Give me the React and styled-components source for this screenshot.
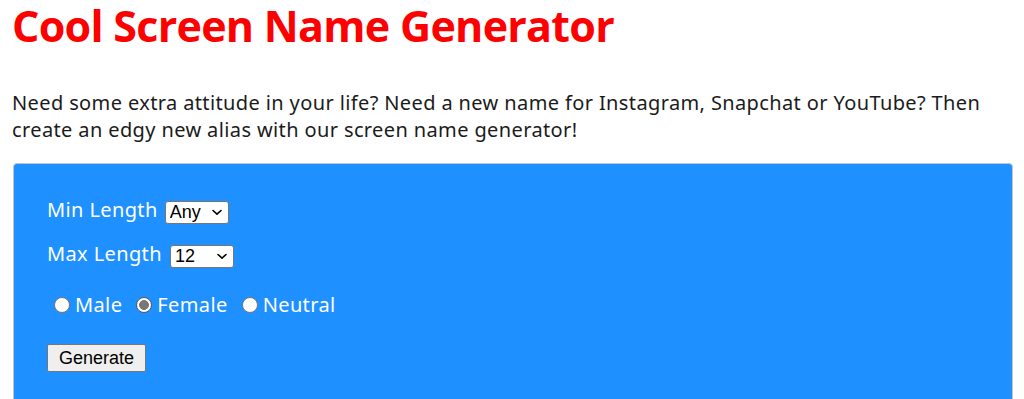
import React, { useState } from "react";
import styled, { createGlobalStyle } from "styled-components";

const GlobalStyle = createGlobalStyle`
  html, body { margin: 0; padding: 0; background: #ffffff; }
  body { font-family: "Noto Sans", "Open Sans", sans-serif; color: #1b1b1b; }
`;

const Page = styled.main`
  padding: 0 11px 0 13px;
`;

const Title = styled.h1`
  margin: 0 0 0 -1px;
  font-family: "Open Sans", "Noto Sans", sans-serif;
  font-size: 43px;
  line-height: 52px;
  font-weight: 700;
  letter-spacing: -0.72px;
  color: #ff0000;
`;

const Intro = styled.p`
  margin: 37px 0 0 -1px;
  font-size: 20px;
  line-height: 27px;
  letter-spacing: 0.38px;
  color: #1b1b1b;
`;

const Panel = styled.section`
  margin-top: 20px;
  background: #1e90ff;
  border: 1px solid #c4c4c4;
  border-radius: 4px;
  padding: 36px 32px 40px 33px;
  display: flex;
  flex-direction: column;
  color: #ffffff;
  min-height: 220px;
`;

const Row = styled.div`
  display: flex;
  align-items: center;
  gap: ${p => p.$gap || 7}px;
  margin-top: ${p => p.$mt || 0}px;
`;

const Label = styled.label`
  font-size: 20px;
  line-height: 20px;
  letter-spacing: 0.38px;
  padding-bottom: 4px;
  white-space: nowrap;
`;

const SelectWrap = styled.span`
  position: relative;
  display: inline-flex;
  width: 64px;
  height: 23px;
`;

const Select = styled.select`
  appearance: none;
  -webkit-appearance: none;
  width: 100%;
  height: 100%;
  box-sizing: border-box;
  font-family: "Liberation Sans", Arial, sans-serif;
  font-size: 18px;
  line-height: 21px;
  color: #000;
  background: #fff;
  border: 1px solid #767676;
  border-radius: 3px;
  padding: 0 0 0 4px;
  outline: none;
`;

const Chevron = styled.svg`
  position: absolute;
  right: 7px;
  top: 8px;
  width: 10px;
  height: 7px;
  pointer-events: none;
`;

const RadioGroup = styled.div`
  display: flex;
  align-items: center;
  gap: 14px;
  margin-top: 27px;
  padding-left: 7px;
`;

const RadioOption = styled.label`
  display: flex;
  align-items: center;
  gap: 5px;
  font-size: 20px;
  line-height: 20px;
  letter-spacing: 0.38px;
  padding-bottom: 2px;
  white-space: nowrap;
  cursor: pointer;
`;

const Radio = styled.input.attrs({ type: "radio" })`
  appearance: none;
  -webkit-appearance: none;
  margin: 0;
  width: 16px;
  height: 16px;
  border-radius: 50%;
  border: 1px solid #767676;
  background: #ffffff;
  box-sizing: border-box;
  &:checked {
    border-color: #5a5a5a;
    background: radial-gradient(circle, #787878 0 4.6px, #ffffff 5.2px);
  }
`;

const Button = styled.button`
  align-self: flex-start;
  margin-top: 27px;
  height: 28px;
  padding: 0 11px;
  font-family: "Liberation Sans", Arial, sans-serif;
  font-size: 18px;
  color: #000;
  background: #efefef;
  border: 1px solid #767676;
  border-radius: 2px;
  cursor: pointer;
`;

const minOptions = ["Any", "4", "5", "6", "7", "8", "9", "10"];
const maxOptions = ["12", "8", "10", "14", "16", "Any"];
const genders = [["male", "Male"], ["female", "Female"], ["neutral", "Neutral"]];

function Dropdown({ id, options, defaultValue }) {
  return (
    <SelectWrap>
      <Select id={id} defaultValue={defaultValue}>
        {options.map(o => <option key={o}>{o}</option>)}
      </Select>
      <Chevron viewBox="0 0 10 7" aria-hidden="true">
        <path d="M1 1.5 L5 5.2 L9 1.5" fill="none" stroke="#000" strokeWidth="1.6" strokeLinecap="round" strokeLinejoin="round" />
      </Chevron>
    </SelectWrap>
  );
}

export default function App() {
  const [gender, setGender] = useState("female");
  return (
    <Page>
      <GlobalStyle />
      <Title>Cool Screen Name Generator</Title>
      <Intro>
        Need some extra attitude in your life? Need a new name for Instagram, Snapchat or YouTube? Then
        create an edgy new alias with our screen name generator!
      </Intro>
      <Panel>
        <Row>
          <Label htmlFor="min">Min Length</Label>
          <Dropdown id="min" options={minOptions} defaultValue="Any" />
        </Row>
        <Row $mt={20} $gap={8}>
          <Label htmlFor="max">Max Length</Label>
          <Dropdown id="max" options={maxOptions} defaultValue="12" />
        </Row>
        <RadioGroup>
          {genders.map(([v, t]) => (
            <RadioOption key={v}>
              <Radio name="gender" value={v} checked={gender === v} onChange={() => setGender(v)} />
              {t}
            </RadioOption>
          ))}
        </RadioGroup>
        <Button type="button">Generate</Button>
      </Panel>
    </Page>
  );
}
